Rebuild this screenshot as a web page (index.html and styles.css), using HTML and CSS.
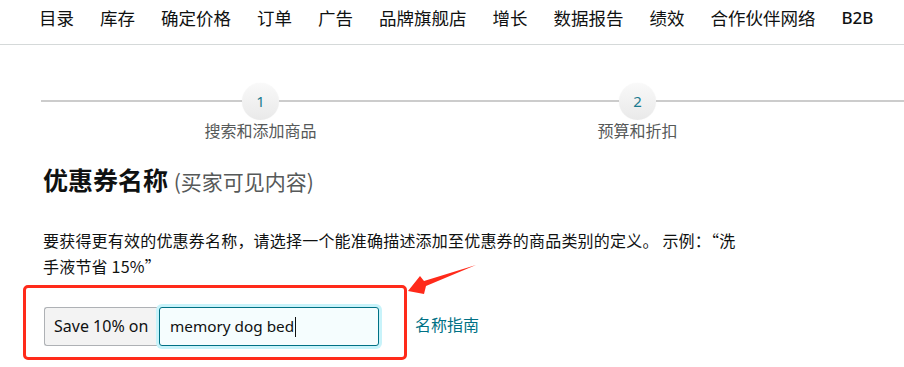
FILE: index.html
```html
<!DOCTYPE html>
<html lang="zh-CN">
<head>
<meta charset="utf-8">
<title>优惠券名称</title>
<link rel="stylesheet" href="styles.css">
</head>
<body>
<nav class="topnav">
  <a class="nav-item">目录</a>
  <a class="nav-item">库存</a>
  <a class="nav-item">确定价格</a>
  <a class="nav-item">订单</a>
  <a class="nav-item">广告</a>
  <a class="nav-item">品牌旗舰店</a>
  <a class="nav-item">增长</a>
  <a class="nav-item">数据报告</a>
  <a class="nav-item">绩效</a>
  <a class="nav-item">合作伙伴网络</a>
  <a class="nav-item latin">B2B</a>
</nav>

<div class="stepper">
  <div class="seg seg-first"></div>
  <div class="step">
    <div class="circle">1</div>
    <div class="step-label">搜索和添加商品</div>
  </div>
  <div class="seg seg-mid"></div>
  <div class="step">
    <div class="circle">2</div>
    <div class="step-label">预算和折扣</div>
  </div>
  <div class="seg seg-last"></div>
</div>

<main class="content">
  <h1 class="title">优惠券名称 <span class="title-note">(买家可见内容)</span></h1>
  <p class="desc">要获得更有效的优惠券名称，请选择一个能准确描述添加至优惠券的商品类别的定义。 示例：“洗手液节省 15%”</p>
  <div class="name-row">
    <div class="input-group">
      <div class="prefix">Save 10% on</div>
      <div class="field"><span class="field-text">memory dog bed</span><span class="caret"></span></div>
    </div>
    <a class="guide-link">名称指南</a>
  </div>
</main>

<div class="annot-box"></div>
<svg class="annot-arrow" width="80" height="40" viewBox="0 0 80 40">
  <polygon points="3,27 15,12 19,17 71,1 21,22 19,30" fill="#ff2a1a"/>
</svg>
</body>
</html>
```

FILE: styles.css
```css
html, body {
  margin: 0;
  padding: 0;
  background: #ffffff;
  overflow: hidden;
}

body {
  font-family: "Noto Sans", "Noto Sans CJK SC", sans-serif;
  color: #0f1111;
  position: relative;
  width: 904px;
  height: 367px;
}

.topnav {
  display: flex;
  gap: 26px;
  padding: 6px 0 0 39px;
  height: 38px;
  border-bottom: 1px solid #d5d9d9;
  white-space: nowrap;
}

.nav-item {
  font-family: "Noto Sans CJK SC", sans-serif;
  font-size: 17.5px;
  line-height: 24px;
  color: #0f1111;
}

.nav-item.latin {
  font-family: "Noto Sans", sans-serif;
  font-weight: 500;
  font-size: 17px;
}

.stepper {
  display: flex;
  align-items: flex-start;
  margin: 38px 0 0 41px;
}

.seg {
  height: 2px;
  background: #cccccc;
  margin-top: 17px;
  flex: none;
}

.seg-first { width: 201px; }
.seg-mid { width: 340px; }
.seg-last { flex: 1; }

.step {
  width: 37px;
  flex: none;
  display: flex;
  flex-direction: column;
  align-items: center;
}

.circle {
  width: 37px;
  height: 37px;
  border-radius: 50%;
  background: linear-gradient(#f9f9f9, #e9e9e9);
  box-shadow: 0 0 1px rgba(0,0,0,0.08);
  color: #1b7b90;
  font-size: 15px;
  line-height: 37px;
  text-align: center;
  flex: none;
}

.step-label {
  white-space: nowrap;
  font-family: "Noto Sans CJK SC", sans-serif;
  font-size: 16px;
  line-height: 21px;
  color: #565959;
}

.content {
  padding-left: 43px;
}

.title {
  margin: 22px 0 0 0;
  font-family: "Noto Sans CJK SC", sans-serif;
  font-size: 25px;
  line-height: 32px;
  font-weight: 700;
  color: #0f1111;
}

.title-note {
  font-size: 21px;
  font-weight: 400;
  color: #565959;
}

.desc {
  margin: 30px 0 0 0;
  width: 702px;
  font-family: "Noto Sans CJK SC", sans-serif;
  font-size: 16px;
  line-height: 26px;
  letter-spacing: 0.2px;
  color: #0f1111;
}

.name-row {
  display: flex;
  align-items: center;
  margin-top: 28px;
  padding-left: 1px;
}

.input-group {
  display: flex;
  height: 39px;
}

.prefix {
  box-sizing: border-box;
  width: 115px;
  height: 39px;
  padding: 0 0 0 9px;
  background: #f3f3f3;
  border: 1px solid #aeb1b5;
  border-right: none;
  border-radius: 3px 0 0 3px;
  font-size: 16px;
  line-height: 37px;
  color: #0f1111;
  white-space: nowrap;
}

.field {
  box-sizing: border-box;
  width: 220px;
  height: 39px;
  padding-left: 10px;
  background: #f5fdfe;
  border: 1px solid #007185;
  border-radius: 3px;
  box-shadow: 0 0 0 3px #c8f3fa;
  font-size: 15.3px;
  line-height: 37px;
  color: #0f1111;
  display: flex;
  align-items: center;
}

.caret {
  display: inline-block;
  width: 1px;
  height: 20px;
  margin-left: 1px;
  background: #0f1111;
}

.guide-link {
  margin-left: 36px;
  margin-top: -6px;
  font-family: "Noto Sans CJK SC", sans-serif;
  font-size: 16px;
  color: #007185;
}

.annot-box {
  position: absolute;
  left: 23px;
  top: 285px;
  width: 378px;
  height: 69px;
  border: 3px solid #ff2a1a;
  border-radius: 5px;
}

.annot-arrow {
  position: absolute;
  left: 405px;
  top: 264px;
}
```
